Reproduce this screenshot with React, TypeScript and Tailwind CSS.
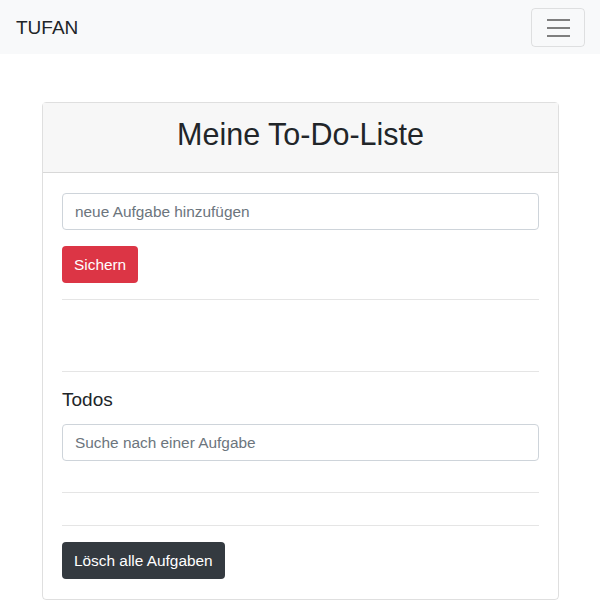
import React from "react";

const App = () => {
  return (
    <div className="min-h-[600px] bg-white font-['Liberation_Sans',Arial,sans-serif] text-[#212529]">
      {/* Navbar */}
      <nav className="h-[54px] bg-[#f8f9fa] flex items-center justify-between pl-4 pr-[15px]">
        <span className="text-[19px] leading-none">TUFAN</span>
        <button className="w-[54px] h-[39px] mt-[1px] border border-[rgba(0,0,0,0.1)] rounded flex flex-col items-center justify-center gap-[6px]">
          <span className="block w-[23px] h-[2px] bg-[#7f7f7f]" />
          <span className="block w-[23px] h-[2px] bg-[#7f7f7f]" />
          <span className="block w-[23px] h-[2px] bg-[#7f7f7f]" />
        </button>
      </nav>

      {/* Card */}
      <div className="w-[517px] ml-[42px] mt-[48px] border border-[rgba(0,0,0,0.125)] rounded">
        <div className="bg-[#f7f7f7] border-b border-[rgba(0,0,0,0.125)] pt-3 pb-[19px] text-center">
          <h2 className="text-[30.5px] leading-[38px]">Meine To-Do-Liste</h2>
        </div>

        <div className="px-[19px] py-5">
          <input
            type="text"
            placeholder="neue Aufgabe hinzufügen"
            className="block w-full h-[37px] px-3 text-[15.4px] border border-[#ced4da] rounded placeholder:text-[#6c757d] outline-none"
          />
          <button className="block mt-4 h-[37px] px-3 bg-[#dc3545] text-white text-[15.4px] leading-6 rounded">
            Sichern
          </button>

          <hr className="mt-4 border-t border-[rgba(0,0,0,0.1)]" />
          <div className="h-[71px]" />
          <hr className="border-t border-[rgba(0,0,0,0.1)]" />

          <h5 className="mt-4 text-[19px] leading-6 mb-3">Todos</h5>
          <input
            type="text"
            placeholder="Suche nach einer Aufgabe"
            className="block w-full h-[37px] px-3 text-[15.4px] border border-[#ced4da] rounded placeholder:text-[#6c757d] outline-none"
          />

          <hr className="mt-[31px] border-t border-[rgba(0,0,0,0.1)]" />
          <hr className="mt-8 border-t border-[rgba(0,0,0,0.1)]" />

          <button className="block mt-4 h-[37px] px-3 bg-[#343a40] text-white text-[15.4px] leading-6 rounded">
            Lösch alle Aufgaben
          </button>
        </div>
      </div>
    </div>
  );
};

export default App;
